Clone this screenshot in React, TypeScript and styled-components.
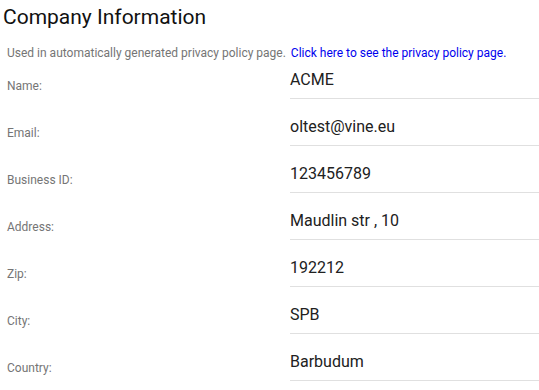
import React from "react";
import styled, { createGlobalStyle } from "styled-components";

const GlobalStyle = createGlobalStyle`
  body {
    margin: 0;
    background: #fff;
    font-family: Roboto, "Liberation Sans", sans-serif;
  }
`;

const fields = [
  { label: "Name:", value: "ACME" },
  { label: "Email:", value: "oltest@vine.eu" },
  { label: "Business ID:", value: "123456789" },
  { label: "Address:", value: "Maudlin str , 10" },
  { label: "Zip:", value: "192212" },
  { label: "City:", value: "SPB" },
  { label: "Country:", value: "Barbudum" },
];

export default function App() {
  return (
    <>
      <GlobalStyle />
      <Section>
        <Title>Company Information</Title>
        <Note>
          Used in automatically generated privacy policy page.{" "}
          <a href="#">Click here to see the privacy policy page.</a>
        </Note>
        <Form>
          {fields.map((f) => (
            <Row key={f.label}>
              <Label>{f.label}</Label>
              <Value>{f.value}</Value>
            </Row>
          ))}
        </Form>
      </Section>
    </>
  );
}

const Section = styled.section`
  padding: 4px 0 0 3px;
`;

const Title = styled.h2`
  margin: 0;
  font-size: 21px;
  font-weight: 400;
  line-height: 26px;
  color: #111;
`;

const Note = styled.p`
  margin: 16px 0 0 4px;
  font-size: 12px;
  line-height: 14px;
  color: #757575;

  a {
    color: #0000ee;
    text-decoration: none;
    margin-left: 2px;
  }
`;

const Form = styled.div`
  display: flex;
  flex-direction: column;
  gap: 8px;
`;

const Row = styled.div`
  display: grid;
  grid-template-columns: 287px 1fr;
`;

const Label = styled.div`
  padding: 19px 0 0 4px;
  font-size: 12px;
  line-height: 14px;
  color: #757575;
`;

const Value = styled.div`
  display: flex;
  align-items: center;
  height: 39px;
  box-sizing: border-box;
  border-bottom: 1px solid #e0e0e0;
  font-size: 16px;
  color: #212121;
`;
